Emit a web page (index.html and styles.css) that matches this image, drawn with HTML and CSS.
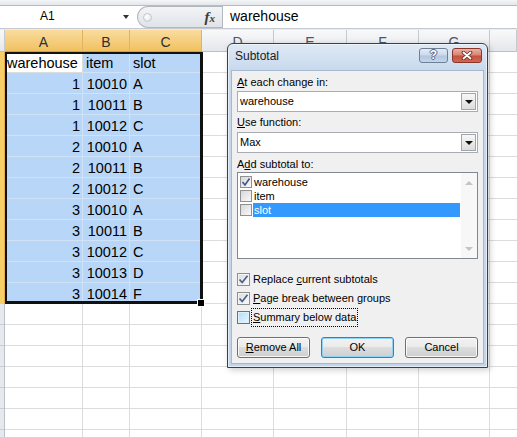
FILE: index.html
```html
<!DOCTYPE html>
<html lang="en">

<head>
  <meta charset="UTF-8">
  <title>Subtotal</title>
  <link rel="stylesheet" href="styles.css">
</head>

<body>
  <div class="formula-area">
    <div class="ribbon-edge"></div>
    <div class="formula-bar">
      <div class="name-box">
        <span class="name-text">A1</span>
        <span class="name-arrow"></span>
      </div>
      <div class="fx-capsule">
        <span class="grip"></span>
        <span class="fx">f<span class="fx-x">x</span></span>
      </div>
      <div class="formula-input">warehouse</div>
    </div>
  </div>

  <div class="sheet">
    <div class="col-headers">
      <div class="ch corner"></div>
      <div class="ch sel col-a">A</div>
      <div class="ch sel col-b">B</div>
      <div class="ch sel col-c">C</div>
      <div class="ch col-d">D</div>
      <div class="ch col-e">E</div>
      <div class="ch col-f">F</div>
      <div class="ch col-g">G</div>
      <div class="ch col-h"></div>
    </div>

    <div class="sheet-body">
      <div class="row-headers">
        <div class="rh-sel"></div>
        <div class="rh"></div>
      </div>
      <div class="cells">
        <div class="data">
          <div class="c active">warehouse</div>
          <div class="c txt-b">item</div>
          <div class="c txt-c">slot</div>

          <div class="c num">1</div><div class="c num">10010</div><div class="c txt-c">A</div>
          <div class="c num">1</div><div class="c num">10011</div><div class="c txt-c">B</div>
          <div class="c num">1</div><div class="c num">10012</div><div class="c txt-c">C</div>
          <div class="c num">2</div><div class="c num">10010</div><div class="c txt-c">A</div>
          <div class="c num">2</div><div class="c num">10011</div><div class="c txt-c">B</div>
          <div class="c num">2</div><div class="c num">10012</div><div class="c txt-c">C</div>
          <div class="c num">3</div><div class="c num">10010</div><div class="c txt-c">A</div>
          <div class="c num">3</div><div class="c num">10011</div><div class="c txt-c">B</div>
          <div class="c num">3</div><div class="c num">10012</div><div class="c txt-c">C</div>
          <div class="c num">3</div><div class="c num">10013</div><div class="c txt-c">D</div>
          <div class="c num">3</div><div class="c num">10014</div><div class="c txt-c">F</div>
        </div>
      </div>
    </div>
  </div>

  <!-- selection outline over A1:C12 -->
  <div class="selection"><span class="fill-handle"></span></div>

  <div class="dialog">
    <div class="dlg-title">
      <span class="dlg-caption">Subtotal</span>
      <span class="cap-btn help">?</span>
      <span class="cap-btn close">
        <svg width="12" height="9" viewBox="0 0 12 9">
          <path d="M2.5 1.5 L9.5 7.5 M9.5 1.5 L2.5 7.5" stroke="#6e2a20" stroke-width="3.6" stroke-linecap="round" fill="none"/>
          <path d="M2.5 1.5 L9.5 7.5 M9.5 1.5 L2.5 7.5" stroke="#fff" stroke-width="1.9" stroke-linecap="round" fill="none"/>
        </svg>
      </span>
    </div>

    <div class="dlg-body">
      <div class="lbl"><u>A</u>t each change in:</div>
      <div class="combo combo-first">
        <span class="combo-text">warehouse</span>
        <span class="drop"></span>
      </div>

      <div class="lbl lbl-use"><u>U</u>se function:</div>
      <div class="combo combo-second">
        <span class="combo-text">Max</span>
        <span class="drop"></span>
      </div>

      <div class="lbl lbl-add">A<u>d</u>d subtotal to:</div>
      <div class="listbox">
        <div class="items">
          <div class="item">
            <span class="lcb">
              <svg width="10" height="10" viewBox="0 0 10 10"><path d="M1.5 5 L4 8 L8.5 1.5" fill="none" stroke="#3d5590" stroke-width="1.6"/></svg>
            </span>
            <span class="item-text">warehouse</span>
          </div>
          <div class="item">
            <span class="lcb"></span>
            <span class="item-text">item</span>
          </div>
          <div class="item picked">
            <span class="lcb"></span>
            <span class="item-text">slot</span>
          </div>
        </div>
        <div class="vscroll">
          <span class="arrow-up"></span>
          <span class="arrow-down"></span>
        </div>
      </div>

      <div class="opts">
        <div class="opt">
          <span class="cb">
            <svg width="11" height="11" viewBox="0 0 11 11"><path d="M1.5 5.5 L4.2 8.5 L9.5 1.8" fill="none" stroke="#4a5e8e" stroke-width="1.7"/></svg>
          </span>
          <span class="opt-text">Replace <u>c</u>urrent subtotals</span>
        </div>
        <div class="opt">
          <span class="cb">
            <svg width="11" height="11" viewBox="0 0 11 11"><path d="M1.5 5.5 L4.2 8.5 L9.5 1.8" fill="none" stroke="#4a5e8e" stroke-width="1.7"/></svg>
          </span>
          <span class="opt-text"><u>P</u>age break between groups</span>
        </div>
        <div class="opt">
          <span class="cb hot"></span>
          <span class="opt-text focus"><u>S</u>ummary below data</span>
        </div>
      </div>

      <div class="buttons">
        <button class="btn"><u>R</u>emove All</button>
        <button class="btn default">OK</button>
        <button class="btn">Cancel</button>
      </div>
    </div>
  </div>
</body>

</html>
```

FILE: styles.css
```css
body {
  margin: 0;
  width: 517px;
  height: 437px;
  overflow: hidden;
  position: relative;
  background: #fff;
  font-family: "Liberation Sans", Arial, sans-serif;
}

/* formula bar */

.formula-area {
  height: 30px;
  background: #e9ecef;
}

.ribbon-edge {
  height: 5px;
  background: linear-gradient(#f4f6f8, #e3e7eb);
  border-bottom: 1px solid #b6bcc4;
}

.formula-bar {
  display: flex;
  height: 23px;
  box-sizing: border-box;
  background: #fff;
  border-bottom: 1px solid #c6cad0;
}

.name-box {
  width: 133px;
  display: flex;
  align-items: center;
}

.name-text {
  align-self: flex-start;
  padding-left: 40px;
  font-size: 12px;
  line-height: 20px;
}

.name-arrow {
  margin-left: auto;
  margin-right: 4px;
  border-left: 3px solid transparent;
  border-right: 3px solid transparent;
  border-top: 4px solid #333;
}

.fx-capsule {
  width: 85px;
  margin-left: 4px;
  box-sizing: border-box;
  display: flex;
  align-items: center;
  border: 1px solid #b3b8bf;
  border-right: 0;
  border-radius: 11px 0 0 11px;
  background: linear-gradient(#f3f4f6, #dfe3e8);
}

.grip {
  width: 7px;
  height: 7px;
  margin-left: 5px;
  border-radius: 50%;
  border: 1px solid #c3c8ce;
  background: radial-gradient(circle at 40% 35%, #fff, #dde1e6);
}

.fx {
  margin-left: auto;
  margin-right: 7px;
  font-family: "Liberation Serif", serif;
  font-style: italic;
  font-weight: bold;
  font-size: 15px;
  line-height: 20px;
  color: #3b3b3b;
}

.fx-x {
  font-size: 11px;
}

.formula-input {
  flex: 1;
  border-left: 1px solid #b3b8bf;
  padding-left: 7px;
  font-size: 14px;
  line-height: 20px;
}

/* sheet */

.col-headers {
  display: flex;
  height: 22px;
}

.ch {
  box-sizing: border-box;
  height: 22px;
  padding-top: 4px;
  border-right: 1px solid #c5cad1;
  border-bottom: 1px solid #b9c0c9;
  background: linear-gradient(#f8f9fa, #e4e7eb);
  color: #4a5566;
  font-size: 14px;
  line-height: 16px;
  text-align: center;
}

.ch.sel {
  background: linear-gradient(#f9dc9f, #f1c15f);
  border-right-color: #e2b263;
  border-bottom-color: #f29436;
  color: #2f2f2f;
}

.corner { width: 5px; }
.col-a { width: 78px; }
.col-b { width: 47px; }
.col-c { width: 72px; }
.col-d { width: 72px; }
.col-e { width: 73px; }
.col-f { width: 72px; }
.col-g { width: 71px; }
.col-h { flex: 1; }

.sheet-body {
  display: flex;
}

.row-headers {
  width: 5px;
  flex: none;
}

.rh-sel {
  height: 252px;
  box-sizing: border-box;
  border-right: 1px solid #e3ad52;
  background: #f7cf68;
}

.rh {
  height: 140px;
  box-sizing: border-box;
  border-right: 1px solid #b9c0c9;
  background: repeating-linear-gradient(to bottom, #e6e9ed 0 20px, #c9ced5 20px 21px);
}

.cells {
  flex: 1;
  height: 392px;
  background:
    linear-gradient(to right,
      transparent 77px, #dadcdd 77px 78px,
      transparent 78px 124px, #dadcdd 124px 125px,
      transparent 125px 196px, #dadcdd 196px 197px,
      transparent 197px 268px, #dadcdd 268px 269px,
      transparent 269px 341px, #dadcdd 341px 342px,
      transparent 342px 413px, #dadcdd 413px 414px,
      transparent 414px 484px, #dadcdd 484px 485px,
      transparent 485px),
    repeating-linear-gradient(to bottom, transparent 0 20px, #dadcdd 20px 21px);
}

.data {
  display: grid;
  grid-template-columns: 78px 47px 72px;
  grid-auto-rows: 21px;
  width: 197px;
}

.c {
  box-sizing: border-box;
  padding: 3px 2px 0 2px;
  background: #b8d7f8;
  border-right: 1px solid #d0e2f6;
  border-bottom: 1px solid #d0e2f6;
  font-size: 14.5px;
  line-height: 17px;
  white-space: nowrap;
}

.c.num {
  text-align: right;
}

.c.txt-b,
.c.txt-c {
  padding-left: 3px;
}

.c.active {
  background: #fff;
  border-color: #dadcdd;
}

.selection {
  position: absolute;
  left: 5px;
  top: 52px;
  width: 198px;
  height: 252px;
  box-sizing: border-box;
  border-style: solid;
  border-color: #111;
  border-width: 2px 3px 3px 2px;
}

.fill-handle {
  position: absolute;
  right: -5px;
  bottom: -6px;
  width: 6px;
  height: 6px;
  background: #000;
  border: 1px solid #fff;
}

/* dialog */

.dialog {
  position: absolute;
  left: 227px;
  top: 43px;
  width: 261px;
  height: 325px;
  box-sizing: border-box;
  display: flex;
  flex-direction: column;
  padding: 0 3px 3px;
  border: 1px solid #34414f;
  border-radius: 6px 6px 0 0;
  background: linear-gradient(#dfe9f5, #c8d9ed 26px, #c3d5ea);
  box-shadow: inset 0 0 0 1px rgba(255, 255, 255, 0.55), 2px 2px 6px rgba(0, 0, 0, 0.2);
  font-size: 11px;
  color: #000;
}

.dlg-title {
  height: 26px;
  flex: none;
  box-sizing: border-box;
  display: flex;
  align-items: flex-start;
  padding-top: 4px;
}

.dlg-caption {
  margin-left: 4px;
  font-size: 12px;
  line-height: 16px;
  color: #1b1b1b;
}

.cap-btn {
  height: 15px;
  box-sizing: border-box;
  border-radius: 3px;
  display: flex;
  align-items: center;
  justify-content: center;
}

.help {
  width: 29px;
  margin-left: auto;
  border: 1px solid #6c7f97;
  background: linear-gradient(#e3ebf5 0%, #cbd9ea 48%, #b2c6de 52%, #c4d5e9 100%);
  color: #fff;
  font-weight: bold;
  font-size: 12px;
  line-height: 13px;
  text-shadow: 1px 0 #53657d, -1px 0 #53657d, 0 1px #53657d, 0 -1px #53657d;
}

.close {
  width: 30px;
  margin-left: 4px;
  margin-right: 2px;
  border: 1px solid #86362b;
  background: linear-gradient(#eab0a3 0%, #d88373 48%, #c5513d 52%, #d2674f 100%);
}

.dlg-body {
  flex: 1;
  display: flex;
  flex-direction: column;
  padding: 4px 5px 5px;
  background: #f0f0f0;
  border: 1px solid #a4b8cf;
}

.lbl {
  height: 15px;
  line-height: 15px;
  white-space: nowrap;
}

.lbl-use {
  margin-top: 3px;
}

.lbl-add {
  margin-top: 4px;
}

.combo {
  height: 21px;
  box-sizing: border-box;
  display: flex;
  align-items: center;
  border: 1px solid #a9adb3;
  background: #fff;
}

.combo-first {
  margin-top: 1px;
}

.combo-second {
  margin-top: 2px;
}

.combo-text {
  align-self: flex-start;
  padding-left: 2px;
  line-height: 19px;
}

.drop {
  margin-left: auto;
  margin-right: 1px;
  width: 15px;
  height: 17px;
  box-sizing: border-box;
  display: flex;
  align-items: center;
  justify-content: center;
  border: 1px solid #a2a6ac;
  background: linear-gradient(#f7f7f7, #dcdcdc);
}

.drop::after {
  content: "";
  border-left: 4px solid transparent;
  border-right: 4px solid transparent;
  border-top: 4px solid #111;
}

.listbox {
  height: 87px;
  box-sizing: border-box;
  display: flex;
  border: 1px solid #828790;
  background: #fff;
}

.items {
  flex: 1;
  padding: 2px 1px 0 2px;
}

.item {
  height: 14px;
  display: flex;
  align-items: center;
}

.lcb {
  width: 12px;
  height: 12px;
  flex: none;
  box-sizing: border-box;
  display: flex;
  align-items: center;
  justify-content: center;
  border: 1px solid #909090;
  background: linear-gradient(135deg, #d8d8d8, #f9f9f9);
}

.item-text {
  flex: 1;
  margin-left: 1px;
  padding-left: 1px;
  line-height: 14px;
}

.item.picked .item-text {
  background: #3399ff;
  color: #fff;
}

.vscroll {
  width: 16px;
  display: flex;
  flex-direction: column;
  justify-content: space-between;
  align-items: center;
  padding: 8px 0 7px;
  box-sizing: border-box;
  background: #f7f7f7;
}

.arrow-up {
  border-left: 4px solid transparent;
  border-right: 4px solid transparent;
  border-bottom: 4px solid #c4c4c4;
}

.arrow-down {
  border-left: 4px solid transparent;
  border-right: 4px solid transparent;
  border-top: 4px solid #c4c4c4;
}

.opts {
  margin-top: 11px;
}

.opt {
  height: 19px;
  display: flex;
  align-items: center;
}

.cb {
  width: 13px;
  height: 13px;
  flex: none;
  box-sizing: border-box;
  display: flex;
  align-items: center;
  justify-content: center;
  border: 1px solid #8e8f8f;
  background: linear-gradient(135deg, #d9dadb, #fbfbfb);
  box-shadow: inset 0 0 0 1px #f4f4f4;
}

.cb.hot {
  border-color: #3c7fb1;
  background: linear-gradient(135deg, #b3dcf4, #eaf7fd);
  box-shadow: inset 0 0 0 1px #def1fb;
}

.opt-text {
  margin-left: 2px;
  padding: 1px;
  line-height: 15px;
  white-space: nowrap;
}

.opt-text.focus {
  outline: 1px dotted #000;
}

.buttons {
  margin-top: 10px;
  display: flex;
  justify-content: space-between;
}

.btn {
  width: 73px;
  height: 21px;
  padding: 0;
  box-sizing: border-box;
  border: 1px solid #707070;
  border-radius: 3px;
  background: linear-gradient(#f2f2f2 0%, #ebebeb 45%, #dddddd 50%, #cfcfcf 100%);
  box-shadow: inset 0 0 0 1px rgba(255, 255, 255, 0.8);
  font-family: "Liberation Sans", Arial, sans-serif;
  font-size: 11px;
  line-height: 19px;
  color: #000;
  text-align: center;
}

.btn.default {
  border-color: #3c7fb1;
  box-shadow: inset 0 0 0 1px #8dd3f5;
}
```
